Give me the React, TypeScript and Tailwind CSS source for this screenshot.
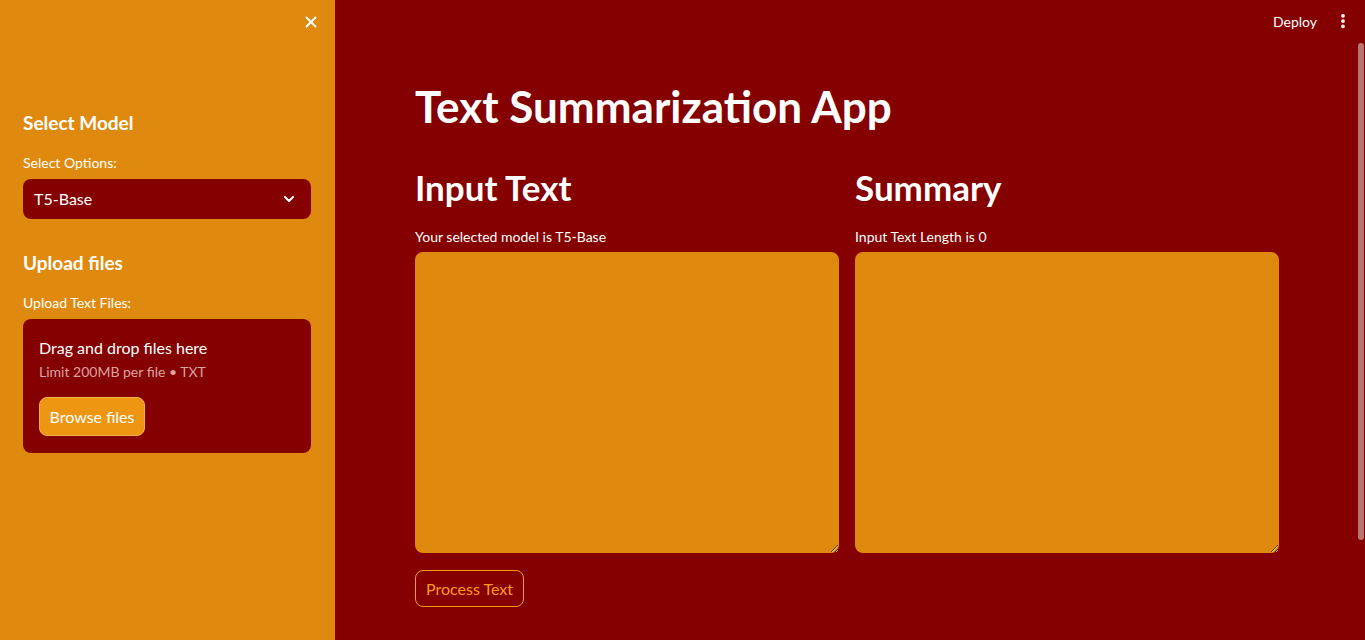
import { X, ChevronDown, EllipsisVertical } from "lucide-react";

const font = { fontFamily: '"Lato", "Liberation Sans", sans-serif' };

export default function App() {
  return (
    <div className="flex h-[640px] w-[1365px] overflow-hidden text-white" style={font}>
      <Sidebar />
      <main className="relative flex flex-1 flex-col bg-[#850000]">
        <header className="flex h-[42px] items-center justify-end gap-[17px] pr-[13px]">
          <span className="text-[14px]">Deploy</span>
          <EllipsisVertical className="h-[18px] w-[18px]" strokeWidth={3} />
        </header>
        <div className="absolute right-[1px] top-[43px] h-[497px] w-[6px] rounded-full bg-[#b97373]" />
        <div className="ml-[80px] w-[864px]">
          <h1 className="mt-[38px] text-[44px] font-bold leading-[53px]">Text Summarization App</h1>
          <div className="mt-[33px] grid grid-cols-2 gap-4">
            <Column title="Input Text" label="Your selected model is T5-Base" />
            <Column title="Summary" label="Input Text Length is 0" />
          </div>
          <button className="mt-[17px] h-[37px] rounded-lg border border-[#f59b0a] px-[10px] text-[16px] text-[#ff9a1f]">
            Process Text
          </button>
        </div>
      </main>
    </div>
  );
}

function Sidebar() {
  return (
    <aside className="flex w-[335px] shrink-0 flex-col bg-[#df8a0e]">
      <div className="flex h-[44px] items-center justify-end pr-[15px]">
        <X className="h-[18px] w-[18px]" strokeWidth={2.5} />
      </div>
      <div className="flex flex-col pl-[23px] pr-[24px]">
        <h3 className="mt-[67px] text-[19px] font-bold leading-[24px]">Select Model</h3>
        <p className="mt-[18px] text-[14px] leading-[20px]">Select Options:</p>
        <div className="mt-[6px] flex h-[40px] items-center justify-between rounded-lg bg-[#850000] pl-[11px] pr-[14px]">
          <span className="text-[16px]">T5-Base</span>
          <ChevronDown className="h-[16px] w-[16px]" strokeWidth={3} />
        </div>
        <h3 className="mt-[32px] text-[19px] font-bold leading-[24px]">Upload files</h3>
        <p className="mt-[18px] text-[14px] leading-[20px]">Upload Text Files:</p>
        <div className="mt-[6px] flex h-[134px] flex-col rounded-lg bg-[#850000] px-[16px] pt-[17px]">
          <span className="text-[16px] leading-[24px]">Drag and drop files here</span>
          <span className="mt-[2px] text-[14px] leading-[20px] text-[#dba3a3]">Limit 200MB per file • TXT</span>
          <button className="mt-[15px] h-[39px] w-[106px] rounded-lg border border-[#f3b04a] bg-[#ee9612] text-[16px]">
            Browse files
          </button>
        </div>
      </div>
    </aside>
  );
}

function Column({ title, label }: { title: string; label: string }) {
  return (
    <div className="flex flex-col">
      <h2 className="text-[35px] font-bold leading-[43px]">{title}</h2>
      <p className="mt-[17px] text-[14px] leading-[21px]">{label}</p>
      <textarea className="mt-[5px] h-[301px] resize-y rounded-lg bg-[#df8a0e] outline-none" />
    </div>
  );
}
